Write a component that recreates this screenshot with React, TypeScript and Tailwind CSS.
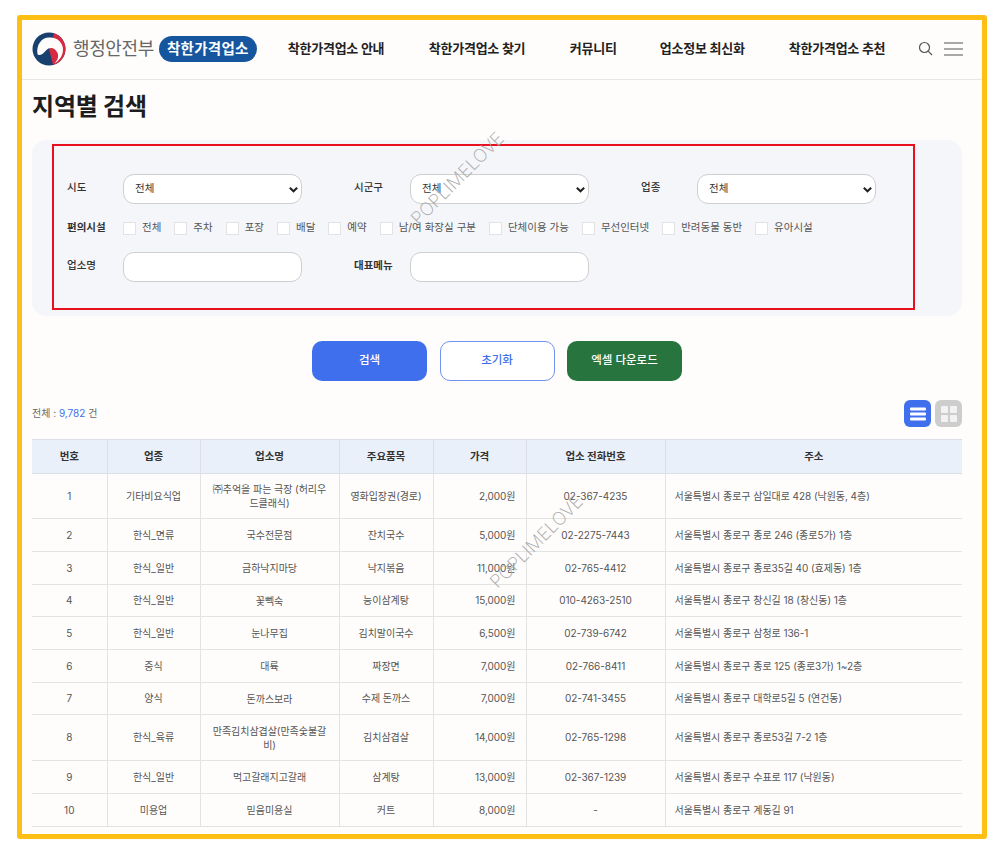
const FONT = "font-['Inter','Noto_Sans_CJK_KR',sans-serif]";

const rows = [
  ["1", "기타비요식업", "㈜추억을 파는 극장 (허리우드클래식)", "영화입장권(경로)", "2,000원", "02-367-4235", "서울특별시 종로구 삼일대로 428 (낙원동, 4층)", "h-[45px]"],
  ["2", "한식_면류", "국수전문점", "잔치국수", "5,000원", "02-2275-7443", "서울특별시 종로구 종로 246 (종로5가) 1층", "h-[33px]"],
  ["3", "한식_일반", "금하낙지마당", "낙지볶음", "11,000원", "02-765-4412", "서울특별시 종로구 종로35길 40 (효제동) 1층", "h-[33px]"],
  ["4", "한식_일반", "꽃뻭숙", "능이삼계탕", "15,000원", "010-4263-2510", "서울특별시 종로구 창신길 18 (창신동) 1층", "h-[32px]"],
  ["5", "한식_일반", "눈나무집", "김치말이국수", "6,500원", "02-739-6742", "서울특별시 종로구 삼청로 136-1", "h-[33px]"],
  ["6", "중식", "대륙", "짜장면", "7,000원", "02-766-8411", "서울특별시 종로구 종로 125 (종로3가) 1~2층", "h-[33px]"],
  ["7", "양식", "돈까스보라", "수제 돈까스", "7,000원", "02-741-3455", "서울특별시 종로구 대학로5길 5 (연건동)", "h-[32px]"],
  ["8", "한식_육류", "만족김치삼겹살(만족숯불갈비)", "김치삼겹살", "14,000원", "02-765-1298", "서울특별시 종로구 종로53길 7-2 1층", "h-[46px]"],
  ["9", "한식_일반", "먹고갈래지고갈래", "삼계탕", "13,000원", "02-367-1239", "서울특별시 종로구 수표로 117 (낙원동)", "h-[33px]"],
  ["10", "미용업", "믿음미용실", "커트", "8,000원", "-", "서울특별시 종로구 계동길 91", "h-[33px]"],
];

const facilities = ["전체", "주차", "포장", "배달", "예약", "남/여 화장실 구분", "단체이용 가능", "무선인터넷", "반려동물 동반", "유아시설"];
const heads = ["번호", "업종", "업소명", "주요품목", "가격", "업소 전화번호", "주소"];

function Logo() {
  return (
    <svg width="34" height="34" viewBox="0 0 34 34" className="shrink-0">
      <circle cx="17" cy="17" r="16.500" fill="#17406f" />
      <path d="M22 1.300A16.500 16.500 0 0 1 21 33L17 17z" fill="#d62a43" />
      <path d="M5.500 22C4 13 9.500 5.500 17 5.500c3 0 6 0.500 8.500 2C29 10 31 13.500 31 17.500c0 6-3.500 11-8.500 14 3-3 4.500-7 3-10.500-1.500-3.500-4-5-6.500-5-4 0-5.500 3.500-8 5.500-2.200 1.800-5 2-5.500 0.500z" fill="#fffdfc" />
    </svg>
  );
}

function Select() {
  return (
    <div className="flex h-[30px] w-[179px] shrink-0 items-center justify-between rounded-[11px] border border-[#cfcfcf] bg-white pl-[11px] pr-[2px]">
      <span className="text-[10.5px] text-[#333]">전체</span>
      <svg width="11" height="11" viewBox="0 0 12 12" fill="none" stroke="#222" strokeWidth="2.200">
        <path d="M2 4l4 4 4-4" />
      </svg>
    </div>
  );
}

function Field() {
  return <div className="h-[30px] w-[179px] shrink-0 rounded-[11px] border border-[#cfcfcf] bg-white" />;
}

function Watermark({ className }: { className: string }) {
  return (
    <span className={`absolute origin-left whitespace-nowrap text-[18px] font-extralight leading-[23px] text-[#a8a8a8] ${className}`}>
      POPLIMELOVE
    </span>
  );
}

export default function App() {
  return (
    <div className={`${FONT} relative h-[845px] w-[994px] overflow-hidden bg-white pl-[17px] pt-[15px]`}>
      <div className="relative h-[824px] w-[970px] rounded-[3px] border-[5px] border-[#fdbf14] bg-[#fffdfc]">
        <header className="flex h-[60px] items-center border-b border-[#e6e6e6] pb-[2px] pl-[10px]">
          <Logo />
          <span className="ml-[7px] text-[18px] tracking-[-0.4px] text-[#666]">행정안전부</span>
          <span className="ml-[5px] flex h-[26px] w-[98px] items-center justify-center whitespace-nowrap rounded-full bg-[#15569f] text-[14.5px] font-bold tracking-[0.3px] text-white">착한가격업소</span>
          <nav className="ml-[31px] flex items-center text-[13px] font-bold tracking-[-0.25px] text-[#222]">
            <span className="w-[98px] whitespace-nowrap">착한가격업소 안내</span>
            <span className="ml-[43px] w-[98px] whitespace-nowrap">착한가격업소 찾기</span>
            <span className="ml-[43px] w-[48px] whitespace-nowrap">커뮤니티</span>
            <span className="ml-[42px] w-[87px] whitespace-nowrap">업소정보 최신화</span>
            <span className="ml-[42px] w-[98px] whitespace-nowrap">착한가격업소 추천</span>
          </nav>
          <svg className="ml-[31px]" width="15" height="15" viewBox="0 0 15 15" fill="none" stroke="#555" strokeWidth="1.200">
            <circle cx="6.500" cy="6.500" r="5" />
            <path d="M10.200 10.200l3.800 3.800" />
          </svg>
          <svg className="ml-[11px]" width="19" height="14" viewBox="0 0 19 14" stroke="#555" strokeWidth="1.100">
            <path d="M0 1h19M0 7h19M0 13h19" />
          </svg>
        </header>

        <main className="pl-[10px]">
          <h1 className="mt-[11px] text-[24px] font-bold leading-[32px] tracking-[-0.2px] text-[#1d1d1d]">지역별 검색</h1>

          <section className="mt-[17px] h-[176px] w-[930px] rounded-[14px] bg-[#f5f6f9] pl-[20px] pt-[4px]">
            <div className="h-[166px] w-[863px] border-2 border-[#e8101e] text-[10.5px]">
              <div className="mt-[28px] flex items-center pl-[13px]">
                <span className="w-[56px] pb-[2px] font-medium text-[#333]">시도</span>
                <Select />
                <span className="ml-[52px] w-[56px] pb-[2px] font-medium text-[#333]">시군구</span>
                <Select />
                <span className="ml-[52px] w-[56px] pb-[2px] font-medium text-[#333]">업종</span>
                <Select />
              </div>
              <div className="mt-[17px] flex h-[14px] items-center pl-[13px]">
                <span className="w-[56px] font-bold text-[#333]">편의시설</span>
                {facilities.map((f) => (
                  <span key={f} className="mr-[13px] flex items-center">
                    <span className="mr-[6px] h-[13px] w-[13px] border border-[#e3e3e3] bg-white" />
                    <span className="whitespace-nowrap text-[#555]">{f}</span>
                  </span>
                ))}
              </div>
              <div className="mt-[17px] flex items-center pl-[13px]">
                <span className="w-[56px] pb-[2px] font-medium text-[#333]">업소명</span>
                <Field />
                <span className="ml-[52px] w-[56px] pb-[2px] font-bold text-[#333]">대표메뉴</span>
                <Field />
              </div>
            </div>
          </section>

          <div className="mt-[25px] flex w-[930px] justify-center gap-[12.5px] text-[11.5px] font-medium">
            <button className="h-[40px] w-[115px] rounded-[10px] bg-[#3f6fec] text-white">검색</button>
            <button className="h-[40px] w-[115px] rounded-[10px] border border-[#6f93ee] bg-white text-[#3f6fec]">초기화</button>
            <button className="h-[40px] w-[115px] rounded-[10px] bg-[#27743f] text-white">엑셀 다운로드</button>
          </div>

          <div className="mt-[19px] flex h-[27px] w-[930px] items-center justify-between">
            <span className="text-[10px] text-[#666]">
              전체 : <span className="text-[#3f6fec]">9,782</span> 건
            </span>
            <div className="flex gap-[4px]">
              <span className="flex h-[27px] w-[27px] items-center justify-center rounded-[6px] bg-[#3f6fec]">
                <svg width="16" height="14" viewBox="0 0 16 14" fill="white">
                  <rect y="0.500" width="16" height="3" rx="1" />
                  <rect y="5.500" width="16" height="3" rx="1" />
                  <rect y="10.500" width="16" height="3" rx="1" />
                </svg>
              </span>
              <span className="flex h-[27px] w-[27px] items-center justify-center rounded-[6px] bg-[#cdcdcd]">
                <svg width="16" height="16" viewBox="0 0 16 16" fill="#f2f2f2">
                  <rect width="7" height="7" rx="1" />
                  <rect x="9" width="7" height="7" rx="1" />
                  <rect y="9" width="7" height="7" rx="1" />
                  <rect x="9" y="9" width="7" height="7" rx="1" />
                </svg>
              </span>
            </div>
          </div>

          <table className="mt-[12px] w-[930px] table-fixed border-collapse text-[10px] tracking-[-0.05px] text-[#555]">
            <colgroup>
              <col className="w-[75px]" />
              <col className="w-[93px]" />
              <col className="w-[139px]" />
              <col className="w-[94px]" />
              <col className="w-[93px]" />
              <col className="w-[139px]" />
              <col className="w-[297px]" />
            </colgroup>
            <thead>
              <tr className="h-[34px] bg-[#e9f0fa]">
                {heads.map((h, i) => (
                  <th key={h} className={`border-y border-[#dcdfe6] text-[10.5px] font-bold text-[#333] ${i < 6 ? "border-r" : ""}`}>{h}</th>
                ))}
              </tr>
            </thead>
            <tbody>
              {rows.map((r) => (
                <tr key={r[0]} className={r[7]}>
                  <td className="border-b border-r border-[#e3e3e3] text-center">{r[0]}</td>
                  <td className="border-b border-r border-[#e3e3e3] text-center">{r[1]}</td>
                  <td className="break-all border-b border-r border-[#e3e3e3] px-[12px] text-center leading-[14px]">{r[2]}</td>
                  <td className="border-b border-r border-[#e3e3e3] text-center">{r[3]}</td>
                  <td className="border-b border-r border-[#e3e3e3] pr-[10px] text-right">{r[4]}</td>
                  <td className="border-b border-r border-[#e3e3e3] text-center">{r[5]}</td>
                  <td className="border-b border-[#e3e3e3] pl-[9px]">{r[6]}</td>
                </tr>
              ))}
            </tbody>
          </table>
        </main>

        <Watermark className="left-[392px] top-[190px] -rotate-[45deg]" />
        <Watermark className="left-[471px] top-[553px] -rotate-[45deg]" />
      </div>
    </div>
  );
}
